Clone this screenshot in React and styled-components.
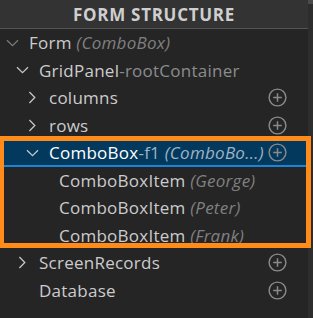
import styled, { createGlobalStyle } from 'styled-components';

const GlobalStyle = createGlobalStyle`
  html, body {
    margin: 0;
    padding: 0;
    background: #252526;
    overflow: hidden;
  }
  * {
    box-sizing: border-box;
  }
`;

const Panel = styled.div`
  display: flex;
  width: 313px;
  height: 318px;
  background: #252526;
  font-family: "Open Sans", "Noto Sans", sans-serif;
  color: #cccccc;
`;

const Main = styled.div`
  flex: 1;
  display: flex;
  flex-direction: column;
  min-width: 0;
`;

const Scrollbar = styled.div`
  width: 5px;
  background: #2d2d2e;
`;

const Thumb = styled.div`
  height: 4px;
  background: #4a4a4a;
`;

const Header = styled.div`
  height: 29px;
  background: #333333;
  border-bottom: 1px solid #545454;
  display: flex;
  align-items: center;
  justify-content: center;
  font-weight: 700;
  font-size: 17px;
  color: #cfcfcf;
  letter-spacing: 0.7px;
`;

const Tree = styled.div`
  display: flex;
  flex-direction: column;
`;

const Group = styled.div`
  position: relative;
  display: flex;
  flex-direction: column;
`;

const Highlight = styled.div`
  position: absolute;
  top: -3px;
  bottom: 1px;
  left: 0;
  right: -3px;
  border: 5px solid #ff8c1a;
  border-left-width: 4px;
  z-index: 2;
  pointer-events: none;
`;

const Row = styled.div`
  height: 27.5px;
  display: flex;
  align-items: center;
  padding-left: ${(p) => p.$level * 10 + 4}px;
  padding-right: 21px;
  font-size: 17px;
  letter-spacing: 0.25px;
  background: ${(p) => (p.$selected ? '#04395e' : 'transparent')};
  box-shadow: ${(p) => (p.$selected ? 'inset 0 -2px 0 #1a85d6' : 'none')};
  color: ${(p) => (p.$selected ? '#ffffff' : '#cccccc')};
`;

const Twistie = styled.span`
  width: 16px;
  height: 16px;
  flex: none;
  display: flex;
  align-items: center;
  justify-content: center;
  color: ${(p) => (p.$dim ? '#7a7a7a' : '#c5c5c5')};
`;

const Label = styled.span`
  margin-left: 9px;
  flex: 1;
  min-width: 0;
  white-space: nowrap;
`;

const Suffix = styled.span`
  color: ${(p) => (p.$selected ? '#9fb3c4' : '#8c8c8c')};
`;

const Desc = styled.span`
  font-style: italic;
  color: ${(p) => (p.$selected ? '#9fb3c4' : '#808080')};
`;

const AddButton = styled.span`
  width: 19px;
  height: 19px;
  flex: none;
  display: flex;
  align-items: center;
  justify-content: center;
  color: #8a8a8a;
`;

const ChevronDown = () => (
  <svg width="13" height="8" viewBox="0 0 13 8">
    <path d="M1 1.2 L6.5 6.6 L12 1.2" fill="none" stroke="currentColor" strokeWidth="1.3" />
  </svg>
);

const ChevronRight = () => (
  <svg width="8" height="13" viewBox="0 0 8 13">
    <path d="M1.4 1 L6.8 6.5 L1.4 12" fill="none" stroke="currentColor" strokeWidth="1.3" />
  </svg>
);

const PlusCircle = () => (
  <svg width="19" height="19" viewBox="0 0 19 19">
    <circle cx="9.5" cy="9.5" r="8.4" fill="none" stroke="currentColor" strokeWidth="1.4" />
    <path d="M9.5 5.2 V13.8 M5.2 9.5 H13.8" stroke="currentColor" strokeWidth="1.5" />
  </svg>
);

function TreeRow({ level, twistie, dim, selected, add, name, suffix, desc }) {
  return (
    <Row $level={level} $selected={selected}>
      <Twistie $dim={dim}>
        {twistie === 'open' && <ChevronDown />}
        {twistie === 'closed' && <ChevronRight />}
      </Twistie>
      <Label>
        {name}
        {suffix && <Suffix $selected={selected}>{suffix}</Suffix>}
        {desc && <Desc $selected={selected}> {desc}</Desc>}
      </Label>
      {add && (
        <AddButton>
          <PlusCircle />
        </AddButton>
      )}
    </Row>
  );
}

export default function App() {
  return (
    <Panel>
      <GlobalStyle />
      <Main>
        <Header>FORM STRUCTURE</Header>
        <Tree>
          <TreeRow level={0} twistie="open" dim name="Form" desc="(ComboBox)" />
          <TreeRow level={1} twistie="open" name="GridPanel" suffix="-rootContainer" />
          <TreeRow level={2} twistie="closed" name="columns" add />
          <TreeRow level={2} twistie="closed" name="rows" add />
          <Group>
            <Highlight />
            <TreeRow level={2} twistie="open" selected name="ComboBox" suffix="-f1" desc="(ComboBo...)" add />
            <TreeRow level={3} name="ComboBoxItem" desc="(George)" />
            <TreeRow level={3} name="ComboBoxItem" desc="(Peter)" />
            <TreeRow level={3} name="ComboBoxItem" desc="(Frank)" />
          </Group>
          <TreeRow level={1} twistie="closed" name="ScreenRecords" add />
          <TreeRow level={1} name="Database" add />
        </Tree>
      </Main>
      <Scrollbar>
        <Thumb />
      </Scrollbar>
    </Panel>
  );
}
